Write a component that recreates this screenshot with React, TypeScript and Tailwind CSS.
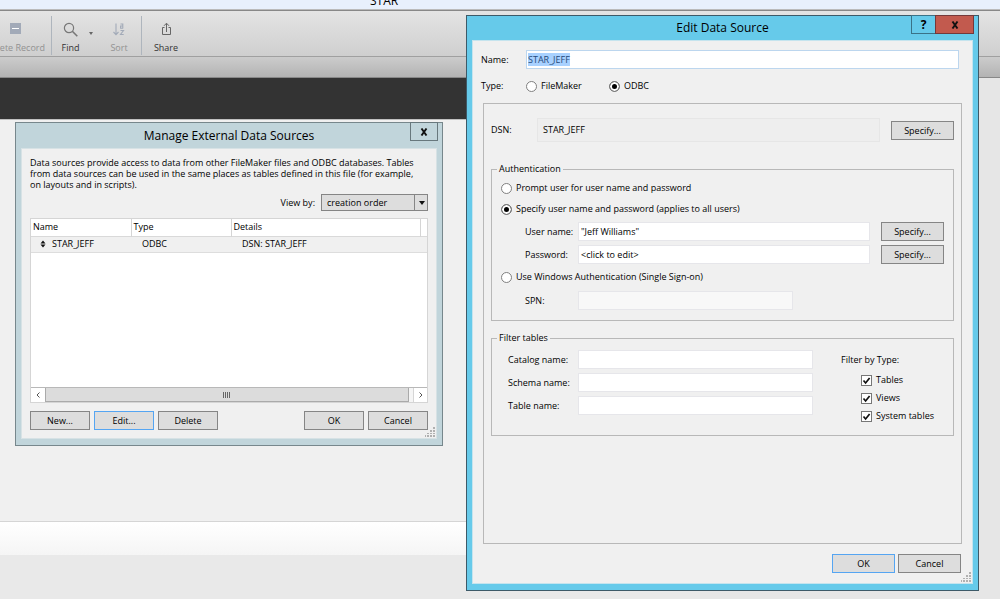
import { useEffect, useRef } from "react";
import type { ReactNode } from "react";

function PushButton({ children, primary = false, className = "w-[60px]" }: { children: ReactNode; primary?: boolean; className?: string }) {
  return (
    <button
      type="button"
      className={`h-[19px] shrink-0 border bg-[#dddddd] text-center leading-[17px] ${primary ? "border-[#55a5f2]" : "border-[#858585]"} ${className}`}
    >
      {children}
    </button>
  );
}

function Radio({ name, label, checked = false }: { name: string; label: string; checked?: boolean }) {
  return (
    <label className="flex h-[18px] items-center gap-1">
      <input
        type="radio"
        name={name}
        defaultChecked={checked}
        className="size-[11px] shrink-0 appearance-none rounded-full border border-[#808080] bg-white checked:bg-black checked:shadow-[inset_0_0_0_2px_#fff]"
      />
      {label}
    </label>
  );
}

function CheckBox({ label }: { label: string }) {
  return (
    <label className="flex h-[18px] items-center gap-1">
      <span className="grid size-[11px] shrink-0">
        <input type="checkbox" defaultChecked className="peer col-start-1 row-start-1 size-[11px] appearance-none border border-[#777777] bg-white" />
        <svg viewBox="0 0 11 11" className="pointer-events-none invisible col-start-1 row-start-1 size-[11px] peer-checked:visible">
          <path d="M2.5 5.5 4.6 8 8.6 3" fill="none" stroke="#111" strokeWidth="1.7" />
        </svg>
      </span>
      {label}
    </label>
  );
}

function TextField({ id, label, value = "", labelClass, fieldClass = "flex-1 bg-white" }: { id: string; label: string; value?: string; labelClass: string; fieldClass?: string }) {
  return (
    <>
      <label htmlFor={id} className={labelClass}>{label}</label>
      <input id={id} defaultValue={value} className={`h-[19px] min-w-0 border border-[#e6e6ea] px-[2px] outline-none ${fieldClass}`} />
    </>
  );
}

function Cross() {
  return (
    <svg viewBox="0 0 8 8" className="size-2">
      <path d="M1.500.5l5 7M6.500.5l-5 7" fill="none" stroke="#111" strokeWidth="1.900" />
    </svg>
  );
}

function Grip() {
  return (
    <svg viewBox="0 0 10 10" className="absolute right-px bottom-px size-[10px]" fill="#b0b0b0">
      <path d="M8 0h2v2H8zM8 3h2v2H8zM5 3h2v2H5zM8 6h2v1H8zM5 6h2v1H5zM2 6h2v1H2zM8 8h2v2H8zM5 8h2v2H5zM2 8h2v2H2zM0 8h1v2H0z" />
    </svg>
  );
}

function Toolbar() {
  return (
    <div className="flex h-[46px] items-stretch border-t border-[#888888] bg-linear-to-b from-[#e4e4e4] to-[#cfcfcf] pt-1 text-[#333333]">
      <button type="button" disabled className="flex w-[51px] flex-col items-end gap-2 overflow-hidden pt-2 pr-[6px] text-[#929292]">
        <svg viewBox="0 0 11 11" className="mr-6 size-[11px] shrink-0"><path d="M0 0h11v11H0z" fill="#a2aab8" /><path d="M2 5.5h7" stroke="#fff" /></svg>
        <span className="whitespace-nowrap">Delete Record</span>
      </button>
      <div className="my-px w-px bg-[#aeb5bd]" />
      <button type="button" className="flex w-[37px] flex-col items-center gap-[5px] pt-[7px]">
        <svg viewBox="0 0 15 15" className="size-[15px]" fill="none" stroke="#777"><circle cx="6" cy="6" r="4.6" strokeWidth="1.2" /><path d="m9.3 9.3 5 5" strokeWidth="1.6" /></svg>
        <span>Find</span>
      </button>
      <button type="button" aria-label="Find options" className="flex w-2 items-start pt-[17px]">
        <svg viewBox="0 0 4 3" className="h-[3px] w-1"><path d="M0 0h4L2 3z" fill="#666" /></svg>
      </button>
      <button type="button" disabled className="flex w-11 flex-col items-center gap-[5px] pt-[7px] text-[#929292]">
        <svg viewBox="0 0 12 15" className="h-[15px] w-3" fill="none" stroke="#a2aab8" strokeWidth="1.1">
          <path d="M3 1.5v11M.5 10 3 12.6 5.500 10" />
          <path d="M7.500 2h2.300v4.500M10 4H7.600v2.200H10M7.500 8.500h3l-3 4h3.200" />
        </svg>
        <span>Sort</span>
      </button>
      <div className="my-px w-px bg-[#aeb5bd]" />
      <button type="button" className="flex w-12 flex-col items-center gap-[5px] pt-[6px]">
        <svg viewBox="0 0 11 16" className="h-4 w-[11px]" fill="none" stroke="#666"><path d="M3.500 6.500h-2v7h8v-7h-2M5.500 11V2.500M3 4.800l2.500-2.600L8 4.800" /></svg>
        <span>Share</span>
      </button>
    </div>
  );
}

function ManageWindow() {
  return (
    <section aria-label="Manage External Data Sources" className="absolute top-[122px] left-[15px] flex w-[428px] flex-col border border-[#77878c] bg-[#c1d5db] px-[5px] pb-[6px]">
      <header className="relative flex h-[25px] items-center justify-center">
        <h2 className="text-[12px] font-normal">Manage External Data Sources</h2>
        <button type="button" aria-label="Close" className="absolute -top-px -right-px flex h-[19px] w-7 items-center justify-center border border-[#68787d]"><Cross /></button>
      </header>
      <div className="relative border border-[#d7e2e5] bg-[#f0f0f0] px-2 pt-2 pb-2">
        <p className="leading-[11px]">
          Data sources provide access to data from other FileMaker files and ODBC databases. Tables<br />
          from data sources can be used in the same places as tables defined in this file (for example,<br />
          on layouts and in scripts).
        </p>
        <div className="mt-1 flex items-center justify-end gap-[6px]">
          <label htmlFor="view">View by:</label>
          <span className="relative flex">
            <select id="view" className="h-[17px] w-[107px] appearance-none border border-[#858585] bg-[#dddddd] pl-[5px]">
              <option>creation order</option>
            </select>
            <span className="pointer-events-none absolute inset-y-0 right-0 flex w-[14px] items-center justify-center border-l border-[#858585]">
              <svg viewBox="0 0 6 4" className="h-1 w-[6px]"><path d="M0 0h6L3 4z" fill="#111" /></svg>
            </span>
          </span>
        </div>
        <div className="mt-[7px] flex h-[185px] flex-col border border-[#d5d5d5] bg-white">
          <table className="w-full table-fixed border-collapse text-left">
            <thead>
              <tr className="h-[17px] border-b border-[#d9d9d9]">
                <th className="w-[100px] border-r border-[#d5d5d5] pl-[2px] font-medium">Name</th>
                <th className="w-[100px] border-r border-[#d5d5d5] pl-[2px] font-medium">Type</th>
                <th className="border-r border-[#d5d5d5] pl-[2px] font-medium">Details</th>
                <th className="w-[7px]" />
              </tr>
            </thead>
            <tbody>
              <tr className="h-4 border-b border-[#dddddd] bg-[#f0f0f0]">
                <td className="pl-[9px]">
                  <span className="flex items-center gap-[6px]">
                    <svg viewBox="0 0 6 8" className="h-2 w-[6px]"><path d="M.5 3.400 3 .5l2.500 2.900zM.5 4.600 3 7.500l2.500-2.900z" fill="#111" /></svg>
                    STAR_JEFF
                  </span>
                </td>
                <td className="pl-[11px]">ODBC</td>
                <td className="pl-[11px]">DSN: STAR_JEFF</td>
                <td />
              </tr>
            </tbody>
          </table>
          <div className="mt-auto flex h-[15px] justify-between border-t border-[#b8b8b8] bg-[#f5f5f5]">
            <button type="button" aria-label="Scroll left" className="flex w-[14px] items-center justify-center bg-white">
              <svg viewBox="0 0 4 6" className="h-[6px] w-1"><path d="M3.500.5 1 3l2.500 2.500" fill="none" stroke="#555" /></svg>
            </button>
            <div className="mr-1 flex flex-1 items-center justify-center border-x border-b border-[#aaaaaa] bg-[#dcdcdc]">
              <svg viewBox="0 0 8 6" className="h-[6px] w-2"><path d="M.5 0v6M2.500 0v6M4.500 0v6M6.500 0v6" stroke="#666" /></svg>
            </div>
            <button type="button" aria-label="Scroll right" className="flex w-[14px] items-center justify-center border-l border-[#d5d5d5] bg-white">
              <svg viewBox="0 0 4 6" className="h-[6px] w-1"><path d="M.5.5 3 3 .5 5.500" fill="none" stroke="#555" /></svg>
            </button>
          </div>
        </div>
        <div className="mt-2 flex gap-1">
          <PushButton>New...</PushButton>
          <PushButton primary>Edit...</PushButton>
          <PushButton>Delete</PushButton>
          <PushButton className="ml-auto w-[60px]">OK</PushButton>
          <PushButton>Cancel</PushButton>
        </div>
        <Grip />
      </div>
    </section>
  );
}

function EditWindow() {
  const nameRef = useRef<HTMLInputElement>(null);
  useEffect(() => {
    nameRef.current?.focus();
    nameRef.current?.select();
  }, []);
  return (
    <section aria-label="Edit Data Source" className="absolute top-[15px] left-[466px] w-[513px] border border-[#3d5a68] bg-[#66caea] px-[5px] pb-[6px]">
      <header className="relative flex h-[24px] items-center justify-center">
        <h2 className="text-[12px] font-normal">Edit Data Source</h2>
        <div className="absolute -top-px -right-px flex h-[19px]">
          <button type="button" aria-label="Help" className="w-[25px] border border-[#3a7287] text-[12px] leading-[17px] font-bold">?</button>
          <button type="button" aria-label="Close" className="-ml-px flex w-[39px] items-center justify-center border border-[#74393a] bg-[#c25a4e]"><Cross /></button>
        </div>
      </header>
      <div className="relative border border-[#c5e4ee] bg-[#f0f0f0] px-2 pt-[9px] pb-[10px]">
        <div className="flex items-center pr-[5px]">
          <label htmlFor="name" className="w-[45px]">Name:</label>
          <input id="name" ref={nameRef} defaultValue="STAR_JEFF" className="h-[19px] min-w-0 flex-1 border border-[#bcd6ee] bg-white px-px outline-none selection:bg-[#a8d1ff] selection:text-[#264a7a]" />
        </div>
        <div role="radiogroup" aria-label="Type" className="mt-2 flex items-center">
          <span className="w-[45px]">Type:</span>
          <span className="w-[83px]"><Radio name="type" label="FileMaker" /></span>
          <Radio name="type" label="ODBC" checked />
        </div>
        <div className="mx-[2px] mt-2 h-[441px] border border-[#b8b8b8] px-[7px] pt-[14px]">
          <div className="flex items-center">
            <label htmlFor="dsn" className="w-[46px]">DSN:</label>
            <input id="dsn" readOnly defaultValue="STAR_JEFF" className="h-6 min-w-0 flex-1 border border-[#e6e6e6] bg-[#eeeeee] px-[5px] pb-[2px] outline-none" />
            <PushButton className="ml-[11px] w-[63px]">Specify...</PushButton>
          </div>
          <fieldset className="mt-[21px] border border-[#b8b8b8] px-[9px] pb-[10px]">
            <legend className="-ml-1 px-[2px] leading-3">Authentication</legend>
            <div className="flex flex-col gap-[3px] pt-1">
              <Radio name="auth" label="Prompt user for user name and password" />
              <Radio name="auth" label="Specify user name and password (applies to all users)" checked />
            </div>
            <div className="mt-1 flex flex-col gap-1">
              <div className="flex items-center pl-6">
                <TextField id="user" label="User name:" value={'"Jeff Williams"'} labelClass="w-[53px] shrink-0 whitespace-nowrap" />
                <PushButton className="ml-[11px] w-[63px]">Specify...</PushButton>
              </div>
              <div className="flex items-center pl-6">
                <TextField id="password" label="Password:" value="<click to edit>" labelClass="w-[53px] shrink-0 whitespace-nowrap" />
                <PushButton className="ml-[11px] w-[63px]">Specify...</PushButton>
              </div>
            </div>
            <div className="mt-1 flex flex-col gap-[5px]">
              <Radio name="auth" label="Use Windows Authentication (Single Sign-on)" />
              <div className="flex items-center pl-6">
                <TextField id="spn" label="SPN:" labelClass="w-[53px] shrink-0" fieldClass="w-[215px] bg-[#f8f8f8]" />
              </div>
            </div>
          </fieldset>
          <fieldset className="mt-[11px] border border-[#b8b8b8] px-4 pb-[10px]">
            <legend className="-ml-[11px] px-[2px] leading-3">Filter tables</legend>
            <div className="flex pt-[6px]">
              <div className="flex w-[305px] flex-col gap-1">
                <div className="flex items-center"><TextField id="catalog" label="Catalog name:" labelClass="w-[70px]" fieldClass="w-[235px] bg-white" /></div>
                <div className="flex items-center"><TextField id="schema" label="Schema name:" labelClass="w-[70px]" fieldClass="w-[235px] bg-white" /></div>
                <div className="flex items-center"><TextField id="table" label="Table name:" labelClass="w-[70px]" fieldClass="w-[235px] bg-white" /></div>
              </div>
              <div className="ml-7">
                <div className="h-[21px] leading-[19px]">Filter by Type:</div>
                <div className="pl-5">
                  <CheckBox label="Tables" />
                  <CheckBox label="Views" />
                  <CheckBox label="System tables" />
                </div>
              </div>
            </div>
          </fieldset>
        </div>
        <div className="mt-[10px] flex justify-end gap-[3px] pr-[3px]">
          <PushButton primary className="w-[63px]">OK</PushButton>
          <PushButton className="w-[63px]">Cancel</PushButton>
        </div>
        <Grip />
      </div>
    </section>
  );
}

export default function App() {
  return (
    <main className="relative flex min-h-screen flex-col overflow-hidden bg-[#e6e6e6] font-['Open_Sans','Noto_Sans',sans-serif] text-[9px] leading-3 font-medium text-black">
      <div className="flex h-[9px] items-end overflow-hidden bg-[#e8f0fc] pl-[370px] text-[12px] leading-4 font-normal">STAR</div>
      <div className="h-px shrink-0 bg-[#bbbbbb]" />
      <Toolbar />
      <div className="h-[22px] border-y border-t-[#a0a0a0] border-b-[#888888] bg-linear-to-b from-[#cccccc] to-[#b3b3b3]" />
      <div className="mr-[300px] flex flex-1 flex-col bg-[#f0f0f0]">
        <div className="h-[41px] bg-[#333333]" />
        <div className="flex-1 border-t border-[#c0c0c0]" />
        <div className="h-[34px] border-t border-[#d5d5d5] bg-linear-to-b from-[#ffffff] to-[#f5f5f5]" />
        <div className="h-11 bg-[#e9e9e9]" />
      </div>
      <ManageWindow />
      <EditWindow />
    </main>
  );
}
